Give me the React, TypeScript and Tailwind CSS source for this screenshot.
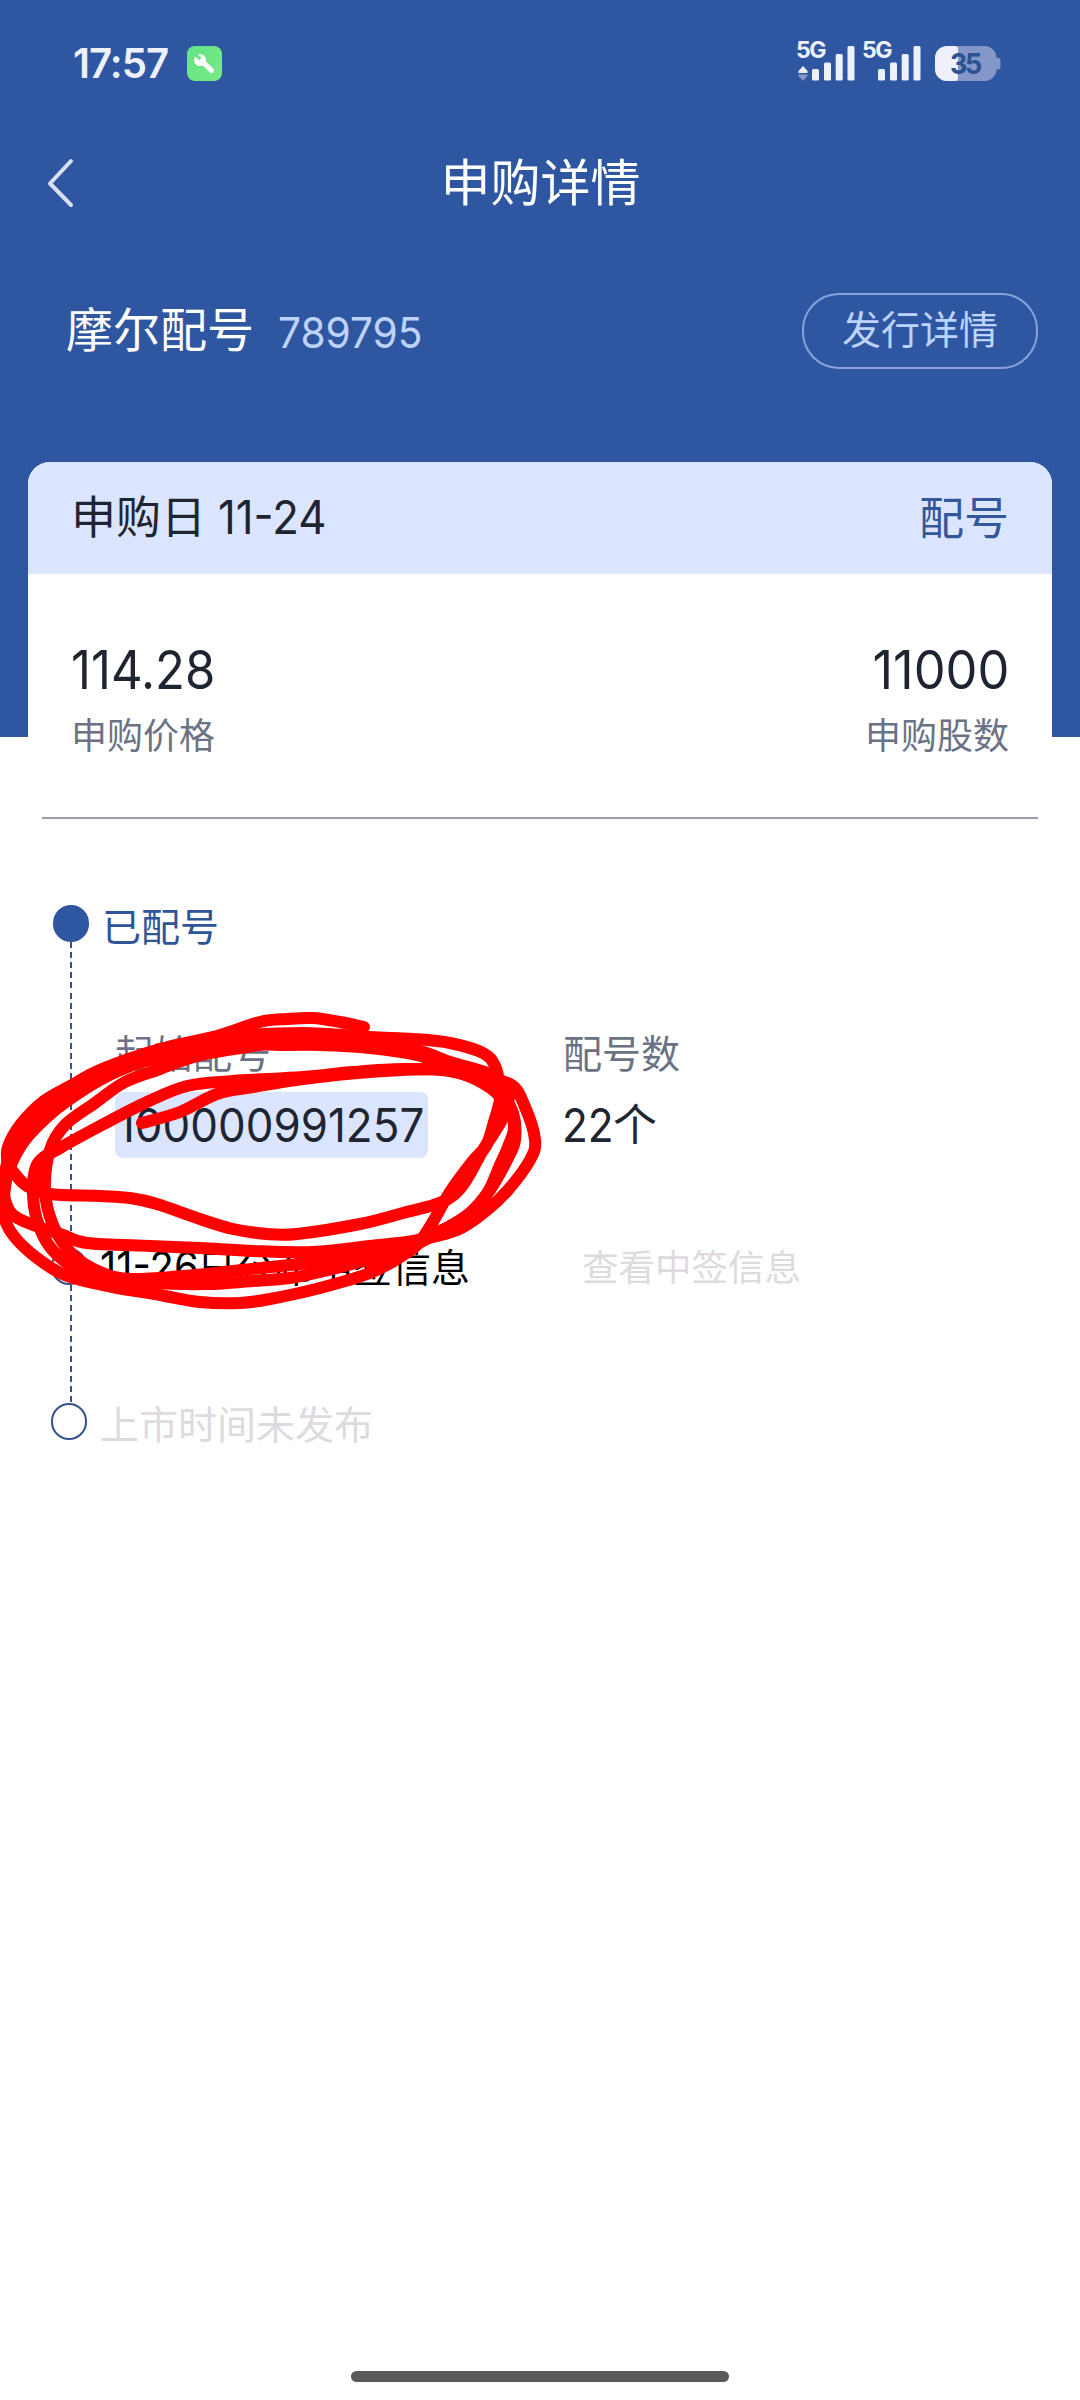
import React from "react";

type Point = [number, number];

const CJK = "font-['Noto_Sans_CJK_SC',sans-serif]";
const NUM = "font-['Inter','Noto_Sans_CJK_SC',sans-serif]";

// hand-drawn marker strokes, in page pixels
const STROKES: Point[][] = [
  [
    [364, 1027], [340, 1022], [313, 1018], [287, 1019], [260, 1022], [217, 1036], [160, 1049], [102, 1069], [72, 1085],
    [44, 1101], [21, 1124], [8, 1147], [8, 1163], [15, 1174], [27, 1186], [50, 1194], [100, 1196], [130, 1198],
    [157, 1204], [200, 1219], [233, 1229], [267, 1234], [297, 1234], [360, 1224], [403, 1213], [442, 1202], [463, 1185],
    [483, 1150], [503, 1117], [500, 1097], [477, 1080], [450, 1071], [403, 1069], [353, 1072], [303, 1077], [233, 1081],
    [187, 1086], [147, 1102], [100, 1126], [60, 1148], [38, 1163], [33, 1190], [37, 1220], [50, 1247], [73, 1267],
    [100, 1278], [153, 1283], [207, 1284], [253, 1281], [290, 1278], [320, 1272], [363, 1261], [410, 1247], [443, 1230],
    [470, 1213], [490, 1190], [507, 1160], [515, 1140], [513, 1113], [500, 1090],
  ],
  [
    [142, 1123], [180, 1112], [217, 1094], [253, 1087], [303, 1079], [370, 1072], [437, 1069], [470, 1076], [510, 1084],
    [525, 1107], [535, 1140], [530, 1160], [508, 1190], [487, 1210], [457, 1230], [413, 1241], [370, 1246], [313, 1252],
    [253, 1251], [200, 1248], [150, 1246], [87, 1243], [63, 1235], [33, 1225], [13, 1215], [5, 1200], [5, 1187],
    [10, 1167], [25, 1140], [47, 1117], [67, 1101], [100, 1080], [133, 1065], [173, 1052], [233, 1037], [303, 1033],
    [370, 1037], [413, 1039], [450, 1043], [483, 1053], [495, 1066], [500, 1087], [500, 1100], [494, 1122], [486, 1146],
    [472, 1162], [450, 1192], [434, 1220], [418, 1244], [400, 1257], [370, 1273], [320, 1288], [270, 1299], [240, 1303],
    [200, 1302], [160, 1295], [113, 1287], [67, 1276], [37, 1258], [13, 1235], [3, 1213], [3, 1187], [8, 1160],
    [20, 1133], [43, 1108], [72, 1090], [110, 1072], [167, 1056], [233, 1045], [290, 1045], [320, 1045], [370, 1048],
    [413, 1054], [437, 1061], [470, 1068], [497, 1080], [510, 1096],
  ],
  [
    [290, 1040], [240, 1048], [197, 1056], [160, 1069], [125, 1082], [95, 1103], [65, 1125], [50, 1150], [45, 1190],
    [53, 1225], [72, 1254], [100, 1272], [130, 1279], [183, 1276], [233, 1271], [290, 1265], [320, 1262], [370, 1254],
    [413, 1243],
  ],
  [
    [290, 1040], [330, 1041], [370, 1043], [420, 1051], [450, 1062], [487, 1073], [505, 1086], [508, 1100], [514, 1127],
    [508, 1147], [500, 1165], [488, 1192], [470, 1213], [447, 1228], [423, 1238], [390, 1254], [372, 1266],
  ],
];

// Catmull-Rom through the points, written as cubic segments
function smooth(pts: Point[]) {
  let d = `M${pts[0][0]} ${pts[0][1]}`;
  for (let i = 0; i < pts.length - 1; i++) {
    const p0 = pts[i - 1] ?? pts[i];
    const p1 = pts[i];
    const p2 = pts[i + 1];
    const p3 = pts[i + 2] ?? p2;
    const c1 = [p1[0] + (p2[0] - p0[0]) / 6, p1[1] + (p2[1] - p0[1]) / 6];
    const c2 = [p2[0] - (p3[0] - p1[0]) / 6, p2[1] - (p3[1] - p1[1]) / 6];
    d += `C${c1[0]} ${c1[1]} ${c2[0]} ${c2[1]} ${p2[0]} ${p2[1]}`;
  }
  return d;
}

function Scribble() {
  return (
    <svg className="pointer-events-none absolute left-0 top-0" width="1080" height="2400" viewBox="0 0 1080 2400" fill="none">
      {STROKES.map((pts, i) => (
        <path key={i} d={smooth(pts)} stroke="#ff0000" strokeWidth="12" strokeLinecap="round" strokeLinejoin="round" />
      ))}
    </svg>
  );
}

function Signal({ arrows }: { arrows?: boolean }) {
  return (
    <div className="relative h-[42px] w-[60px]">
      <span className={`absolute left-0 top-0 text-[23px] font-bold leading-[20px] tracking-[-1.5px] text-[#eef1fd] ${NUM}`}>
        5G
      </span>
      <svg className="absolute left-0 top-0" width="60" height="42" viewBox="0 0 60 42" fill="#eef1fd">
        {arrows && (
          <>
            <path d="M7 26 L11.5 31 V33 H2.5 V31 Z" />
            <path d="M7 41 L11.5 36 V34.5 H2.5 V36 Z" fill="#8497c8" />
          </>
        )}
        <rect x="16" y="29" width="7" height="11.5" rx="1.5" />
        <rect x="28" y="22.5" width="7" height="18" rx="1.5" />
        <rect x="39.7" y="14" width="7" height="26.5" rx="1.5" />
        <rect x="51.5" y="6" width="7" height="34.5" rx="1.5" />
      </svg>
    </div>
  );
}

function Battery() {
  return (
    <div className="relative ml-[13px] h-[35px] w-[66px]">
      <svg width="66" height="35" viewBox="0 0 66 35">
        <path d="M12 0H50A12 12 0 0 1 61.5 12H63a2.5 2.5 0 0 1 2.5 2.5V21a2.5 2.5 0 0 1-2.5 2.5H61.5A12 12 0 0 1 50 35H12A12 12 0 0 1 0 23V12A12 12 0 0 1 12 0Z" fill="#8497c8" />
        <path d="M12 0H20a3 3 0 0 1 3 3V32a3 3 0 0 1-3 3H12A12 12 0 0 1 0 23V12A12 12 0 0 1 12 0Z" fill="#eef1fd" />
      </svg>
      <span className={`absolute left-[15px] top-0 origin-left scale-x-[0.93] text-[29px] font-bold leading-[35px] tracking-[-2.5px] text-[#2b5291] ${NUM}`}>
        35
      </span>
    </div>
  );
}

function StatusBar() {
  return (
    <div className="flex h-[128px] items-start justify-between pl-[73px] pr-[79px]">
      <div className="flex items-center pt-[46px]">
        <span className={`inline-block w-[114px] origin-left scale-x-[0.98] text-[41px] font-semibold leading-[35px] tracking-[-1px] text-[#eef1fd] ${NUM}`}>
          17:57
        </span>
        <svg width="35" height="35" viewBox="0 0 35 35">
          <defs>
            <linearGradient id="tool" x1="0" y1="0" x2="1" y2="1">
              <stop offset="0" stopColor="#5fe486" />
              <stop offset="1" stopColor="#7bea83" />
            </linearGradient>
          </defs>
          <rect width="35" height="35" rx="8" fill="url(#tool)" />
          <path d="M15 15L24.5 24.5" stroke="#fff" strokeWidth="5.2" strokeLinecap="round" />
          <path d="M11 8.3 L14.6 11.9 L12.4 14.2 L8.2 10.6 A6 6 0 1 0 19 14.5 A6.2 6.2 0 0 0 11 8.3Z" fill="#fff" />
        </svg>
      </div>
      <div className="flex items-start gap-[6px] pt-[40px]">
        <Signal arrows />
        <Signal />
        <div className="-ml-[6px] pt-[6px]">
          <Battery />
        </div>
      </div>
    </div>
  );
}

function Metric({ value, label, right }: { value: string; label: string; right?: boolean }) {
  return (
    <div className={`flex flex-col ${right ? "items-end" : "items-start"}`}>
      <span
        className={`inline-block text-[53px] leading-[64px] text-[#1f2530] ${NUM} ${
          right ? "origin-right scale-x-[0.955]" : "origin-left scale-x-[0.925]"
        }`}
      >
        {value}
      </span>
      <span className={`text-[36px] leading-[62px] text-[#6b7284] ${CJK}`}>{label}</span>
    </div>
  );
}

function Timeline() {
  return (
    <div className="flex pl-[51px] pt-[86px]">
      <div className="flex w-[38px] shrink-0 flex-col items-center">
        <div className="ml-[2px] h-[37px] w-[36px] shrink-0 rounded-full bg-[#2f57a1]" />
        <div className="ml-[2px] h-[306px] w-[2px] bg-[repeating-linear-gradient(to_bottom,#34538e_0_6px,transparent_6px_10.1px)]" />
        <div className="mr-[2px] h-[37px] w-[36px] shrink-0 rounded-full border-2 border-[#34538e]" />
        <div className="ml-[2px] h-[118px] w-[2px] bg-[repeating-linear-gradient(to_bottom,#34538e_0_6px,transparent_6px_10.1px)]" />
        <div className="mr-[2px] h-[37px] w-[36px] shrink-0 rounded-full border-2 border-[#34538e]" />
      </div>

      <div className={`flex flex-col ${CJK}`}>
        <div className="h-[126px] pl-[13px] text-[39px] leading-[39px] text-[#2e5596]">已配号</div>
        <div className="flex pl-[26px]">
          <div className="w-[448px]">
            <div className="text-[39px] leading-[40px] text-[#6b7284]">起始配号</div>
            <div className="mt-[21px] h-[66px] w-[313px] rounded-[8px] bg-[#dbe5ff] pl-[2px]">
              <span className={`inline-block origin-left scale-x-[0.935] text-[47px] leading-[66px] text-[#1f2530] ${NUM}`}>
                100000991257
              </span>
            </div>
          </div>
          <div>
            <div className="text-[39px] leading-[40px] text-[#6b7284]">配号数</div>
            <div className="mt-[21px] flex text-[44px] leading-[66px] text-[#1f2530]">
              <span className={`-ml-px inline-block w-[51px] origin-left scale-x-[0.9] text-[47px] ${NUM}`}>22</span>
              <span className="leading-[61px]">个</span>
            </div>
          </div>
        </div>
        <div className="mt-[85px] flex h-[46px] items-center whitespace-nowrap">
          <div className="flex w-[493px] shrink-0 pl-[11px] text-[39px] leading-[46px] text-black">
            <span className={`inline-block w-[97px] origin-left scale-x-[0.93] text-[43px] ${NUM}`}>11-26</span>
            <span className="leading-[44px]">日公布中签信息</span>
          </div>
          <div className="text-[36.5px] leading-[46px] text-[#dedade]">查看中签信息</div>
        </div>
        <div className="mt-[110px] pl-[11px] text-[39px] leading-[46px] text-[#dedade]">上市时间未发布</div>
      </div>
    </div>
  );
}

export default function App() {
  return (
    <div className="relative flex h-[2400px] w-[1080px] flex-col overflow-hidden bg-[linear-gradient(to_bottom,#2f57a1_737px,#ffffff_737px)]">
      <StatusBar />

      <header className="flex h-[110px] items-center pl-[46px] pr-[73px]">
        <svg width="28" height="50" viewBox="0 0 28 50" fill="none">
          <path d="M25 3L4 25.5L25 47" stroke="#d9def3" strokeWidth="4" strokeLinecap="round" strokeLinejoin="round" />
        </svg>
        <h1 className={`flex-1 pb-[8px] text-center text-[50px] leading-[60px] text-white ${CJK}`}>申购详情</h1>
      </header>

      <div className="flex h-[224px] items-start justify-between pl-[66px] pr-[42px] pt-[55px]">
        <div className="flex h-[76px] items-center">
          <span className={`pb-[8px] text-[47px] leading-[60px] text-white ${CJK}`}>摩尔配号</span>
          <span className={`ml-[24px] inline-block origin-left scale-x-[0.945] pt-[2px] text-[43px] leading-[60px] text-[#bdd3fd] ${NUM}`}>
            789795
          </span>
        </div>
        <button className={`h-[76px] w-[236px] rounded-[37px] border-2 border-[#86a3dc] pb-[8px] text-[39px] leading-[60px] text-[#bdd3fd] ${CJK}`}>
          发行详情
        </button>
      </div>

      <section className="mx-[28px] h-[355px] rounded-t-[22px] bg-white">
        <div className={`flex h-[112px] items-center justify-between rounded-t-[22px] bg-[#dbe5ff] px-[43px] pb-[4px] text-[45px] leading-[60px] ${CJK}`}>
          <div className="flex text-[#1f2530]">
            <span>申购日</span>
            <span className={`ml-[12px] inline-block origin-left scale-x-[0.93] pt-[2px] text-[47px] ${NUM}`}>11-24</span>
          </div>
          <span className="text-[#33579b]">配号</span>
        </div>
        <div className="flex justify-between px-[43px] pt-[64px]">
          <Metric value="114.28" label="申购价格" />
          <Metric value="11000" label="申购股数" right />
        </div>
      </section>
      <div className="mx-[42px] h-[2px] shrink-0 bg-[#9c9db2]" />

      <Timeline />

      <div className="mx-auto mb-[18px] mt-auto h-[11px] w-[378px] rounded-full bg-[#5c595d]" />
      <Scribble />
    </div>
  );
}
